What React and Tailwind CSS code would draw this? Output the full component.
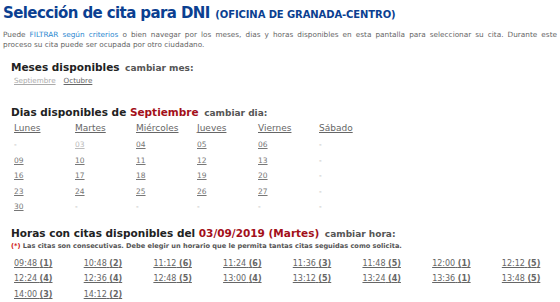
import React from 'react';

const days = ['Lunes', 'Martes', 'Miércoles', 'Jueves', 'Viernes', 'Sábado'];

// null = "-" placeholder, off = greyed out day
const weeks = [
  [null, { d: '03', off: true }, { d: '04' }, { d: '05' }, { d: '06' }, null],
  [{ d: '09' }, { d: '10' }, { d: '11' }, { d: '12' }, { d: '13' }, null],
  [{ d: '16' }, { d: '17' }, { d: '18' }, { d: '19' }, { d: '20' }, null],
  [{ d: '23' }, { d: '24' }, { d: '25' }, { d: '26' }, { d: '27' }, null],
  [{ d: '30' }, null, null, null, null, null],
];

const slots = [
  ['09:48', 1], ['10:48', 2], ['11:12', 6], ['11:24', 6],
  ['11:36', 3], ['11:48', 5], ['12:00', 1], ['12:12', 5],
  ['12:24', 4], ['12:36', 4], ['12:48', 5], ['13:00', 4],
  ['13:12', 5], ['13:24', 4], ['13:36', 1], ['13:48', 5],
  ['14:00', 3], ['14:12', 2],
];

const App = () => {
  return (
    <div className="w-[560px] h-[302px] overflow-hidden bg-white text-[#555] font-['DejaVu_Sans',Verdana,sans-serif]">
      {/* Title */}
      <h1 className="pl-[3px] pt-[2px] h-[24px] leading-[21px] whitespace-nowrap text-[#0b3f91] font-bold">
        <span className="text-[15px] tracking-[-0.6px]">Selección de cita para DNI</span>{' '}
        <span className="text-[10px] tracking-[-0.1px]">(OFICINA DE GRANADA-CENTRO)</span>
      </h1>

      {/* Intro */}
      <div className="mt-[5.5px] px-[3px] text-[7.3px] leading-[10px] text-[#666]">
        <p className="whitespace-nowrap text-justify [text-align-last:justify]">
          Puede <span className="text-[#2a88d0]">FILTRAR</span>{' '}
          <span className="text-[#2a88d0]">según criterios</span> o bien navegar por los meses, dias y horas
          disponibles en esta pantalla para seleccionar su cita. Durante este
        </p>
        <p>proceso su cita puede ser ocupada por otro ciudadano.</p>
      </div>

      {/* Months */}
      <div className="pl-[11px] mt-[9.5px]">
        <h2 className="h-[14px] leading-[14px] whitespace-nowrap font-bold text-[#222]">
          <span className="text-[10.5px]">Meses disponibles</span>{' '}
          <span className="text-[9px] text-[#555]">cambiar mes:</span>
        </h2>
        <div className="mt-[2px] pl-[3px] flex gap-[8px] text-[7.2px] leading-[12px]">
          <a className="underline text-[#aaa]">Septiembre</a>
          <a className="underline text-[#666]">Octubre</a>
        </div>
      </div>

      {/* Days */}
      <div className="pl-[11px] mt-[17px]">
        <h2 className="h-[14px] leading-[14px] whitespace-nowrap font-bold text-[#222]">
          <span className="text-[10.5px]">Dias disponibles de </span>
          <span className="text-[10.5px] text-[#a3101a]">Septiembre</span>{' '}
          <span className="text-[9px] text-[#555]">cambiar dia:</span>
        </h2>
        <div className="pl-[3px] mt-[3px]">
          <div className="flex h-[16px] items-center text-[9px] text-[#666]">
            {days.map((d) => (
              <div key={d} className="w-[61px]">
                <span className="underline">{d}</span>
              </div>
            ))}
          </div>
          {weeks.map((w, i) => (
            <div key={i} className="flex h-[15.5px] items-center text-[7.5px] text-[#777]">
              {w.map((c, j) => (
                <div key={j} className="w-[61px]">
                  {c ? (
                    <span className={c.off ? 'underline text-[#bbb]' : 'underline'}>{c.d}</span>
                  ) : (
                    <span className="text-[#aaa]">-</span>
                  )}
                </div>
              ))}
            </div>
          ))}
        </div>
      </div>

      {/* Hours */}
      <div className="pl-[11px] mt-[10.5px]">
        <h2 className="h-[14px] leading-[14px] whitespace-nowrap font-bold text-[#222]">
          <span className="text-[10.5px]">Horas con citas disponibles del </span>
          <span className="text-[10.5px] text-[#a3101a]">03/09/2019 (Martes)</span>{' '}
          <span className="text-[9px] text-[#555]">cambiar hora:</span>
        </h2>
        <p className="mt-[2px] h-[10px] text-[6.6px] leading-[10px] font-bold text-[#555] whitespace-nowrap">
          <span className="text-[#cc1111]">(*)</span> Las citas son consecutivas. Debe elegir un horario que le
          permita tantas citas seguidas como solicita.
        </p>
        <div className="mt-[5px] pl-[3px] grid grid-cols-[repeat(8,69.7px)] auto-rows-[15.5px] items-center text-[8px] text-[#666]">
          {slots.map(([t, n]) => (
            <div key={t} className="whitespace-nowrap">
              <span className="underline">
                {t} <b>({n})</b>
              </span>
            </div>
          ))}
        </div>
      </div>
    </div>
  );
};

export default App;
